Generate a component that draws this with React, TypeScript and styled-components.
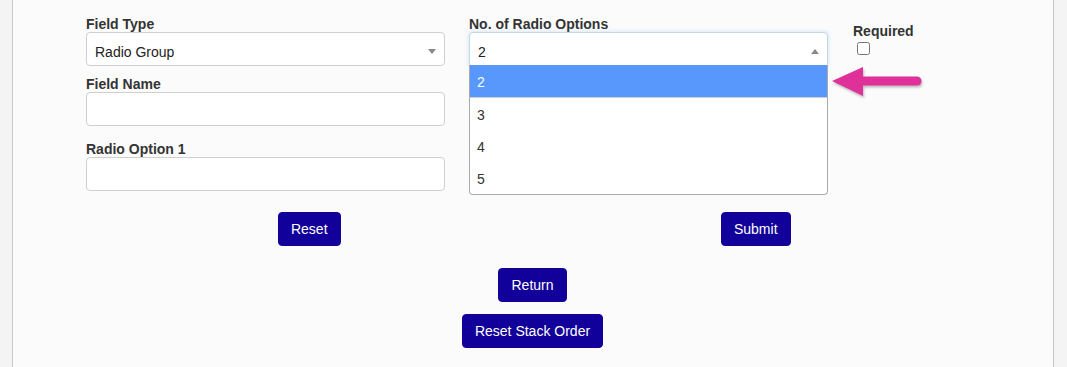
import styled, { createGlobalStyle } from "styled-components";

const GlobalStyle = createGlobalStyle`
  html, body {
    margin: 0;
    padding: 0;
    background: #f4f4f4;
    font-family: "Liberation Sans", Arial, sans-serif;
    font-size: 14px;
    color: #333;
  }
`;

const radioCounts = ["2", "3", "4", "5"];

const App = () => {
  const selected = "2";

  return (
    <>
      <GlobalStyle />
      <Panel>
        <Form>
          <Column>
            <Field>
              <Label>Field Type</Label>
              <Select>
                <SelectValue>Radio Group</SelectValue>
                <Caret />
              </Select>
            </Field>
            <Field $gap={10}>
              <Label>Field Name</Label>
              <TextInput type="text" />
            </Field>
            <Field $gap={15}>
              <Label>Radio Option 1</Label>
              <TextInput type="text" />
            </Field>
          </Column>

          <Column>
            <Field>
              <Label>No. of Radio Options</Label>
              <SelectWrap>
                <Select $open>
                  <SelectValue>{selected}</SelectValue>
                  <Caret $up />
                </Select>
                <Dropdown>
                  {radioCounts.map((n) => (
                    <Option key={n} $active={n === selected}>
                      {n}
                    </Option>
                  ))}
                </Dropdown>
              </SelectWrap>
            </Field>
          </Column>

          <RequiredColumn>
            <Label>Required</Label>
            <Checkbox type="checkbox" />
          </RequiredColumn>

          {/* annotation arrow pointing at the highlighted option */}
          <Pointer width="94" height="36" viewBox="0 0 94 36">
            <path d="M35 17 L89 17" stroke="#e0309a" strokeWidth="9" strokeLinecap="round" />
            <path d="M4 17 L35 3 L35 32 Z" fill="#e0309a" />
          </Pointer>
        </Form>

        <ButtonRow>
          <Half>
            <Button>Reset</Button>
          </Half>
          <Half>
            <Button>Submit</Button>
          </Half>
        </ButtonRow>

        <Centered $top={22}>
          <Button>Return</Button>
        </Centered>
        <Centered $top={12}>
          <Button>Reset Stack Order</Button>
        </Centered>
      </Panel>
    </>
  );
};

export default App;

const Panel = styled.div`
  margin: 0 13px 0 12px;
  min-height: 100vh;
  box-sizing: border-box;
  background: #fbfbfb;
  border-left: 1px solid #c8c8c8;
  border-right: 1px solid #c8c8c8;
  padding: 16px 74px 20px 73px;
`;

const Form = styled.div`
  position: relative;
  display: grid;
  grid-template-columns: 359px 359px 1fr;
  column-gap: 24px;
  align-items: start;
`;

const Column = styled.div`
  display: flex;
  flex-direction: column;
`;

const RequiredColumn = styled.div`
  display: flex;
  flex-direction: column;
  align-items: flex-start;
  padding-top: 7px;
  padding-left: 1px;
`;

const Field = styled.div<{ $gap?: number }>`
  display: flex;
  flex-direction: column;
  margin-top: ${({ $gap }) => $gap ?? 0}px;
`;

const Label = styled.label`
  display: block;
  font-weight: bold;
  font-size: 14px;
  line-height: 16px;
  color: #333;
`;

const Select = styled.div<{ $open?: boolean }>`
  position: relative;
  height: 34px;
  box-sizing: border-box;
  background: #fff;
  border: 1px solid ${({ $open }) => ($open ? "#c4d6e6" : "#cfcfcf")};
  border-radius: ${({ $open }) => ($open ? "4px 4px 0 0" : "4px")};
  box-shadow: ${({ $open }) => ($open ? "0 0 4px rgba(102, 175, 233, 0.35)" : "none")};
  display: flex;
  align-items: center;
`;

const SelectValue = styled.span`
  padding: 5px 0 0 8px;
  font-size: 14px;
  color: #222;
`;

const Caret = styled.span<{ $up?: boolean }>`
  position: absolute;
  right: 8px;
  top: 50%;
  margin-top: 0;
  width: 0;
  height: 0;
  border-style: solid;
  border-color: ${({ $up }) => ($up ? "transparent transparent #888 transparent" : "#888 transparent transparent transparent")};
  border-width: ${({ $up }) => ($up ? "0 4px 5px 4px" : "5px 4px 0 4px")};
`;

const SelectWrap = styled.div`
  position: relative;
`;

const Dropdown = styled.ul`
  position: absolute;
  left: 0;
  right: 0;
  top: 100%;
  margin: -1px 0 0;
  padding: 0;
  list-style: none;
  background: #fff;
  border: 1px solid #aaa;
  border-top: none;
  border-radius: 0 0 4px 4px;
  z-index: 2;
`;

const Option = styled.li<{ $active?: boolean }>`
  padding: 7px 7px 5px;
  line-height: 20px;
  font-size: 14px;
  color: ${({ $active }) => ($active ? "#fff" : "#333")};
  background: ${({ $active }) => ($active ? "#5897fb" : "transparent")};
  border-bottom: ${({ $active }) => ($active ? "1px solid #d0d0d0" : "none")};
`;

const TextInput = styled.input`
  height: 34px;
  box-sizing: border-box;
  width: 100%;
  border: 1px solid #cfcfcf;
  border-radius: 4px;
  background: #fff;
  padding: 6px 8px;
  font: inherit;
`;

const Checkbox = styled.input`
  width: 13px;
  height: 13px;
  margin: 3px 0 0 4px;
`;

const Pointer = styled.svg`
  position: absolute;
  left: 742px;
  top: 48px;
  filter: drop-shadow(1px 2px 1px rgba(0, 0, 0, 0.25));
  z-index: 3;
`;

const ButtonRow = styled.div`
  display: grid;
  grid-template-columns: 1fr 1fr;
  margin-top: 21px;
`;

const Half = styled.div`
  display: flex;
  justify-content: center;
`;

const Centered = styled.div<{ $top: number }>`
  display: flex;
  justify-content: center;
  margin-top: ${({ $top }) => $top}px;
`;

const Button = styled.button`
  background: #12009a;
  color: #fff;
  border: 1px solid #12009a;
  border-radius: 4px;
  padding: 6px 12px;
  font-family: "Liberation Sans", Arial, sans-serif;
  font-size: 14px;
  line-height: 20px;
  cursor: pointer;
`;
